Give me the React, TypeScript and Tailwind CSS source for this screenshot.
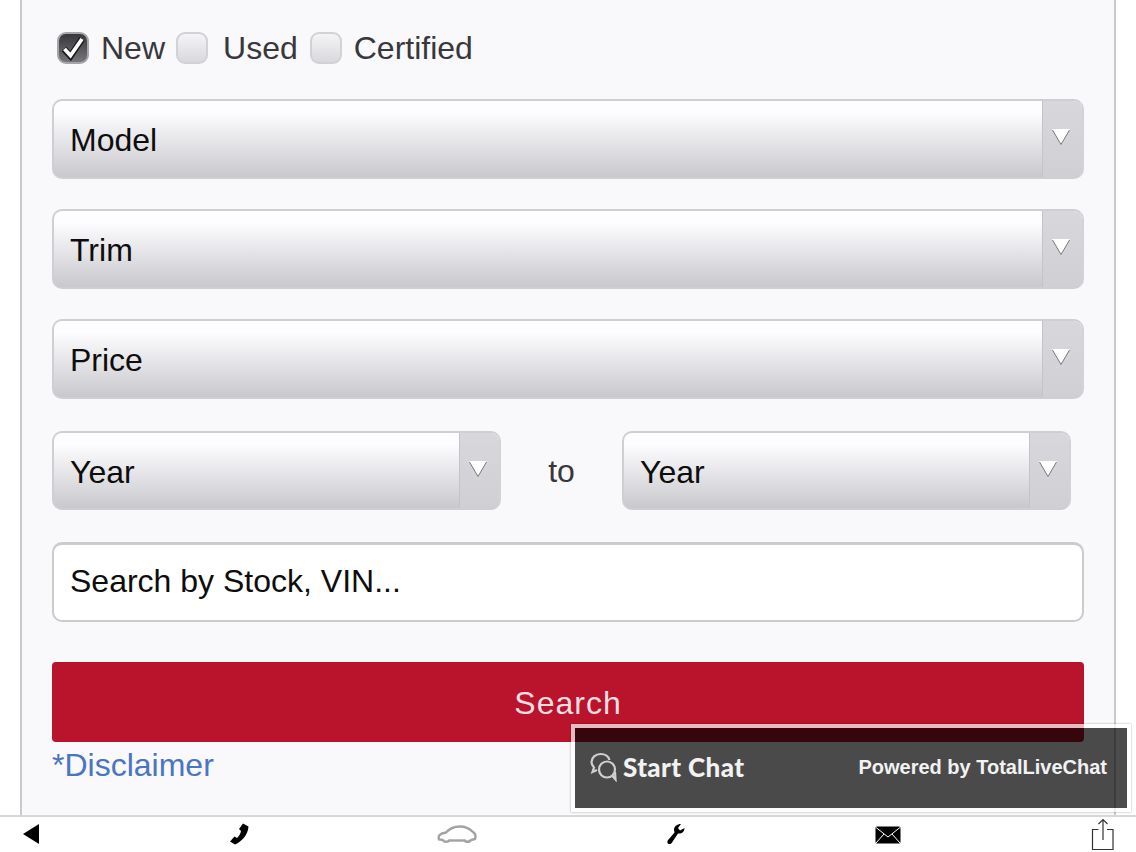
import React from "react";

function Arrow() {
  return (
    <div className="w-[40px] h-full shrink-0 border-l border-[#c4c3c7] bg-gradient-to-b from-[#d8d7db] to-[#d0cfd3] flex justify-center pt-[27px] pr-[3px]">
      <svg width="20" height="18" viewBox="0 0 20 18">
        <polygon points="1,1 19,1 10,17" fill="#ffffff" />
        <path d="M1.5 2 L10 16.5 L18.5 2" fill="none" stroke="#77767a" strokeWidth="1" />
      </svg>
    </div>
  );
}

function Select({ label, className }: { label: string; className: string }) {
  return (
    <div className={`rounded-[10px] border-2 border-[#cfced2] border-r-[#d3d2d6] bg-gradient-to-b from-[#fdfcff] from-15% to-[#c9c8cc] flex items-center overflow-hidden ${className}`}>
      <span className="flex-1 pl-[16px] pt-[2px] text-[32px] text-[#0d0d0d]">{label}</span>
      <Arrow />
    </div>
  );
}

function Check({ checked }: { checked?: boolean }) {
  if (checked) {
    return (
      <span className="w-[32px] h-[32px] rounded-[9px] border-2 border-[#a5a4a8] bg-gradient-to-b from-[#38373b] to-[#77767a] flex items-center justify-center">
        <svg width="28" height="28" viewBox="0 0 28 28">
          <path d="M5 15 L11.5 22 L23 5" fill="none" stroke="#1a1a1a" strokeWidth="6.5" />
          <path d="M5.5 15 L11.5 21.5 L23 5" fill="none" stroke="#ffffff" strokeWidth="3.8" />
        </svg>
      </span>
    );
  }
  return <span className="w-[32px] h-[32px] rounded-[9px] border-2 border-[#d2d1d5] bg-gradient-to-b from-[#f4f3f6] to-[#d9d8dc]" />;
}

export default function App() {
  return (
    <div className="relative w-[1136px] h-[852px] overflow-hidden bg-white font-['Liberation_Sans',Arial,sans-serif]">
      <div className="ml-[20px] w-[1096px] h-[816px] border-x-2 border-[#cbcacd] bg-[#f9f8fb] pl-[30px] pr-[30px] pt-[32px]">
        <div className="flex items-center h-[32px] pl-[5px] text-[32px] text-[#38373b]">
          <Check checked />
          <span className="ml-[12px]">New</span>
          <span className="ml-[11px] flex"><Check /></span>
          <span className="ml-[15px]">Used</span>
          <span className="ml-[12px] flex"><Check /></span>
          <span className="ml-[12px]">Certified</span>
        </div>

        <Select label="Model" className="mt-[35px] w-[1032px] h-[80px]" />
        <Select label="Trim" className="mt-[30px] w-[1032px] h-[80px]" />
        <Select label="Price" className="mt-[30px] w-[1032px] h-[80px]" />

        <div className="mt-[32px] flex items-center">
          <Select label="Year" className="w-[449px] h-[79px]" />
          <span className="w-[121px] text-center text-[32px] text-[#38373b]">to</span>
          <Select label="Year" className="w-[449px] h-[79px]" />
        </div>

        <div className="mt-[32px] w-[1032px] h-[80px] rounded-[10px] border-2 border-[#cbcacd] border-t-[3px] bg-white flex items-center pl-[16px] pb-[3px] text-[32px] text-[#0d0d0d]">
          Search by Stock, VIN...
        </div>

        <div className="mt-[40px] w-[1032px] h-[80px] rounded-[4px] bg-[#b9142c] flex items-center justify-center pt-[2px] text-[32px] tracking-[1px] text-[#f4dfe2]">
          Search
        </div>

        <div className="mt-[5px] text-[32px] leading-[36px] text-[#4a75c2]">*Disclaimer</div>
      </div>

      <div className="absolute left-[571px] top-[724px] w-[560px] h-[88px] border-[4px] border-[#ffffff]/70 bg-[#000000]/70 bg-clip-padding shadow-[0_0_2px_rgba(0,0,0,0.35)] flex items-center justify-between pl-[15px] pr-[20px] pb-[2px] text-[#f2f2f2]">
        <div className="flex items-center">
          <svg width="28" height="30" viewBox="0 0 28 30" fill="none" stroke="#d0d0d0" strokeWidth="2.2">
            <path d="M7 18 L2.5 20 L4 15.5 C2.5 14 1.5 12 1.5 10 C1.5 5.5 5.5 2 10.5 2 C15 2 18.5 4.5 19.5 8" />
            <circle cx="17" cy="17.5" r="8" />
            <path d="M22 23.5 L25.5 27.5 L25 20" />
          </svg>
          <span className="ml-[5px] font-['Lato',sans-serif] font-black text-[26px] tracking-[0.4px]">Start Chat</span>
        </div>
        <span className="text-[20px] font-bold">Powered by TotalLiveChat</span>
      </div>

      <div className="absolute left-0 right-0 top-[815px] h-[37px] border-t-2 border-[#d8d7da] bg-white">
        <svg className="absolute left-[22px] top-[6px]" width="18" height="22" viewBox="0 0 18 22">
          <polygon points="17,1 17,21 1,11" fill="#000000" />
        </svg>
        <svg className="absolute left-[229px] top-[6px]" width="20" height="22" viewBox="0 0 20 22">
          <path d="M14 0.5 L19.5 3.5 C19 11.5 13 18.5 6 21.5 L1 18.5 L5.5 13.5 L8 15 C10 13 11.5 11 12 8 L10 6 Z" fill="#000000" />
        </svg>
        <svg className="absolute left-[437px] top-[7px]" width="40" height="20" viewBox="0 0 40 20" fill="none" stroke="#a3a3a3" strokeWidth="2.4">
          <path d="M6 16 L2 15.5 C0.8 11.5 3 9.5 9 8.5 C13 4 17 2.5 23 2.5 C30 2.5 33 5 36 8 C38.5 9.5 39 12 38 15 L34 16" />
          <path d="M13 16.5 L27 16.5" />
          <path d="M6 15.5 C6.5 18.5 11.5 18.5 13 15.5 M27 15.5 C28 18.5 33 18.5 34 15.5" />
        </svg>
        <svg className="absolute left-[666px] top-[6px]" width="20" height="22" viewBox="0 0 20 22">
          <path d="M8 7 C8 3.5 11 1 15 1 L12 5 L14 7.5 L18.5 5 C18.5 9 15.5 11 12 10.5 L6 19.5 C5 21.5 2 21.5 1.5 20 C1 18.5 1.5 17.5 3 16 L8.5 9.5 Z" fill="#000000" />
        </svg>
        <svg className="absolute left-[875px] top-[9px]" width="26" height="18" viewBox="0 0 26 18">
          <rect x="0.5" y="0.5" width="25" height="17" rx="1.5" fill="#000000" />
          <path d="M1 1.5 L13 11 L25 1.5 M1 17 L9 8 M25 17 L17 8" fill="none" stroke="#ffffff" strokeWidth="1" />
        </svg>
        <svg className="absolute left-[1091px] top-[1px]" width="24" height="33" viewBox="0 0 24 33" fill="none" stroke="#333333" strokeWidth="1.2">
          <path d="M7.5 11.5 H1.5 V31.5 H22 V11.5 H16" />
          <path d="M12 22 V1.5 M7.5 6 L12 1.5 L16.5 6" />
        </svg>
      </div>
    </div>
  );
}
